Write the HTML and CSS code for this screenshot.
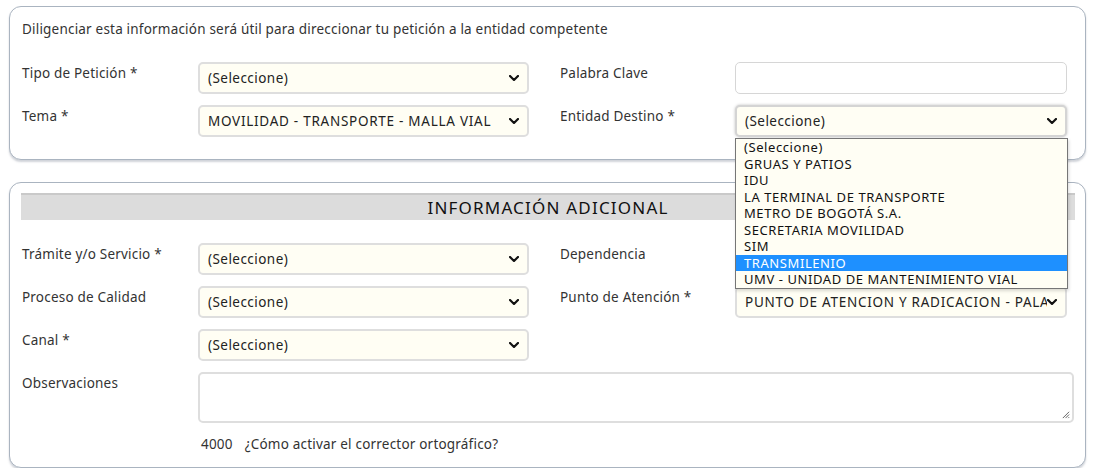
FILE: index.html
```html
<!DOCTYPE html>
<html lang="es">
<head>
<meta charset="utf-8">
<title>Formulario</title>
<link rel="stylesheet" href="styles.css">
</head>
<body>
<section class="panel panel-top">
  <p class="intro">Diligenciar esta información será útil para direccionar tu petición a la entidad competente</p>
  <div class="grid">
    <label class="lbl">Tipo de Petición *</label>
    <div class="sel"><span>(Seleccione)</span><svg class="chev" viewBox="0 0 10 6"><path d="M1 1l4 4 4-4"/></svg></div>
    <label class="lbl lbl-r">Palabra Clave</label>
    <div class="inp"></div>

    <label class="lbl">Tema *</label>
    <div class="sel"><span class="caps">MOVILIDAD - TRANSPORTE - MALLA VIAL</span><svg class="chev" viewBox="0 0 10 6"><path d="M1 1l4 4 4-4"/></svg></div>
    <label class="lbl lbl-r">Entidad Destino *</label>
    <div class="dd-wrap">
      <div class="sel sel-focus"><span>(Seleccione)</span><svg class="chev" viewBox="0 0 10 6"><path d="M1 1l4 4 4-4"/></svg></div>
      <ul class="dd">
        <li>(Seleccione)</li>
        <li>GRUAS Y PATIOS</li>
        <li>IDU</li>
        <li>LA TERMINAL DE TRANSPORTE</li>
        <li>METRO DE BOGOTÁ S.A.</li>
        <li>SECRETARIA MOVILIDAD</li>
        <li>SIM</li>
        <li class="hl">TRANSMILENIO</li>
        <li>UMV - UNIDAD DE MANTENIMIENTO VIAL</li>
      </ul>
    </div>
  </div>
</section>

<section class="panel panel-bottom">
  <h2 class="bar">INFORMACIÓN ADICIONAL</h2>
  <div class="grid grid2">
    <label class="lbl">Trámite y/o Servicio *</label>
    <div class="sel"><span>(Seleccione)</span><svg class="chev" viewBox="0 0 10 6"><path d="M1 1l4 4 4-4"/></svg></div>
    <label class="lbl lbl-r">Dependencia</label>
    <div class="sel sel-hidden"></div>

    <label class="lbl">Proceso de Calidad</label>
    <div class="sel"><span>(Seleccione)</span><svg class="chev" viewBox="0 0 10 6"><path d="M1 1l4 4 4-4"/></svg></div>
    <label class="lbl lbl-r">Punto de Atención *</label>
    <div class="sel"><span class="caps clip">PUNTO DE ATENCION Y RADICACION - PALA</span><svg class="chev" viewBox="0 0 10 6"><path d="M1 1l4 4 4-4"/></svg></div>

    <label class="lbl">Canal *</label>
    <div class="sel"><span>(Seleccione)</span><svg class="chev" viewBox="0 0 10 6"><path d="M1 1l4 4 4-4"/></svg></div>
    <div class="empty"></div>
    <div class="empty"></div>

    <label class="lbl">Observaciones</label>
    <div class="ta"><svg class="grip" viewBox="0 0 10 10"><path d="M9 2L2 9M9 5L5 9M9 8L8 9"/></svg></div>

    <div class="empty"></div>
    <p class="foot"><span>4000</span><span>¿Cómo activar el corrector ortográfico?</span></p>
  </div>
</section>
</body>
</html>
```

FILE: styles.css
```css
* { box-sizing: border-box; }
html, body { margin: 0; padding: 0; background: #fff; }
body {
  font-family: "Noto Sans", "Open Sans", "Liberation Sans", sans-serif;
  font-size: 13.5px;
  letter-spacing: 0.2px;
  color: #333;
  padding: 6px 9px 0 9px;
  width: 1095px;
}
.panel {
  border: 1px solid #aab4c0;
  border-radius: 12px;
  box-shadow: 0 2px 2px rgba(120,130,145,0.35);
  background: #fff;
}
.panel-top {
  height: 154px;
  padding: 13px 0 0 12px;
}
.intro {
  margin: 0;
  line-height: 18px;
  height: 18px;
}
.grid {
  display: grid;
  grid-template-columns: 176px 331px 206px 332px 8px;
  row-gap: 11px;
  margin-top: 24px;
}
.grid > .inp, .grid > .dd-wrap, .grid > .sel:nth-child(4n) { grid-column: 4; }
.lbl {
  grid-column: 1;
  padding-top: 2px;
  line-height: 18px;
}
.lbl-r { grid-column: 3; padding-left: 31px; }
.sel, .inp {
  height: 32px;
  border: 2px solid #dedede;
  border-radius: 5px;
  background: #fffef4;
  display: flex;
  align-items: center;
  justify-content: space-between;
  padding: 0 8px 0 8px;
  color: #222;
  overflow: hidden;
  letter-spacing: 0.45px;
}
.inp { background: #fff; border-width: 1px; border-color: #d6d6d6; }
.sel span { white-space: nowrap; overflow: hidden; }
.sel .caps { letter-spacing: 0.73px; }
.sel .clip { max-width: 306px; }
.chev {
  width: 10px;
  height: 6px;
  flex: none;
  fill: none;
  stroke: #111;
  stroke-width: 2.2;
  stroke-linecap: round;
  stroke-linejoin: round;
}
.sel-focus { box-shadow: 0 0 3px rgba(0,0,0,0.25); border-color: #d4d4d4; }
.dd-wrap { position: relative; }
.dd {
  position: absolute;
  left: 0;
  top: 33px;
  width: 333px;
  margin: 0;
  padding: 0;
  list-style: none;
  background: #fffef4;
  border: 1px solid #767676;
  box-shadow: 1px 2px 3px rgba(0,0,0,0.15);
  z-index: 10;
  color: #111;
  font-size: 13px;
  letter-spacing: 0.58px;
}
.dd li {
  height: 16.5px;
  line-height: 16.5px;
  padding-left: 8px;
  white-space: nowrap;
}
.dd li.hl { background: #1e90ff; color: #fff; }

.panel-bottom {
  margin-top: 22px;
  height: 286px;
  padding: 10px 0 0 11px;
}
.bar {
  margin: 0;
  width: 1054px;
  height: 27px;
  background: #dcdcdc;
  border-top: 2px solid #c9c9c9;
  text-align: center;
  font-size: 17px;
  font-weight: 400;
  line-height: 25px;
  color: #111;
  letter-spacing: 1.2px;
}
.grid2 { margin-top: 23px; padding-left: 1px; }
.ta {
  grid-column: 2 / 6;
  height: 51px;
  border: 2px solid #dedede;
  border-radius: 5px;
  margin-right: 1px;
  position: relative;
}
.grip {
  position: absolute;
  right: 2px;
  bottom: 2px;
  width: 9px;
  height: 9px;
  stroke: #555;
  stroke-width: 1;
  fill: none;
}
.foot {
  grid-column: 2 / 6;
  margin: 1px 0 0 3px;
  line-height: 18px;
  display: flex;
  gap: 12px;
}
```
